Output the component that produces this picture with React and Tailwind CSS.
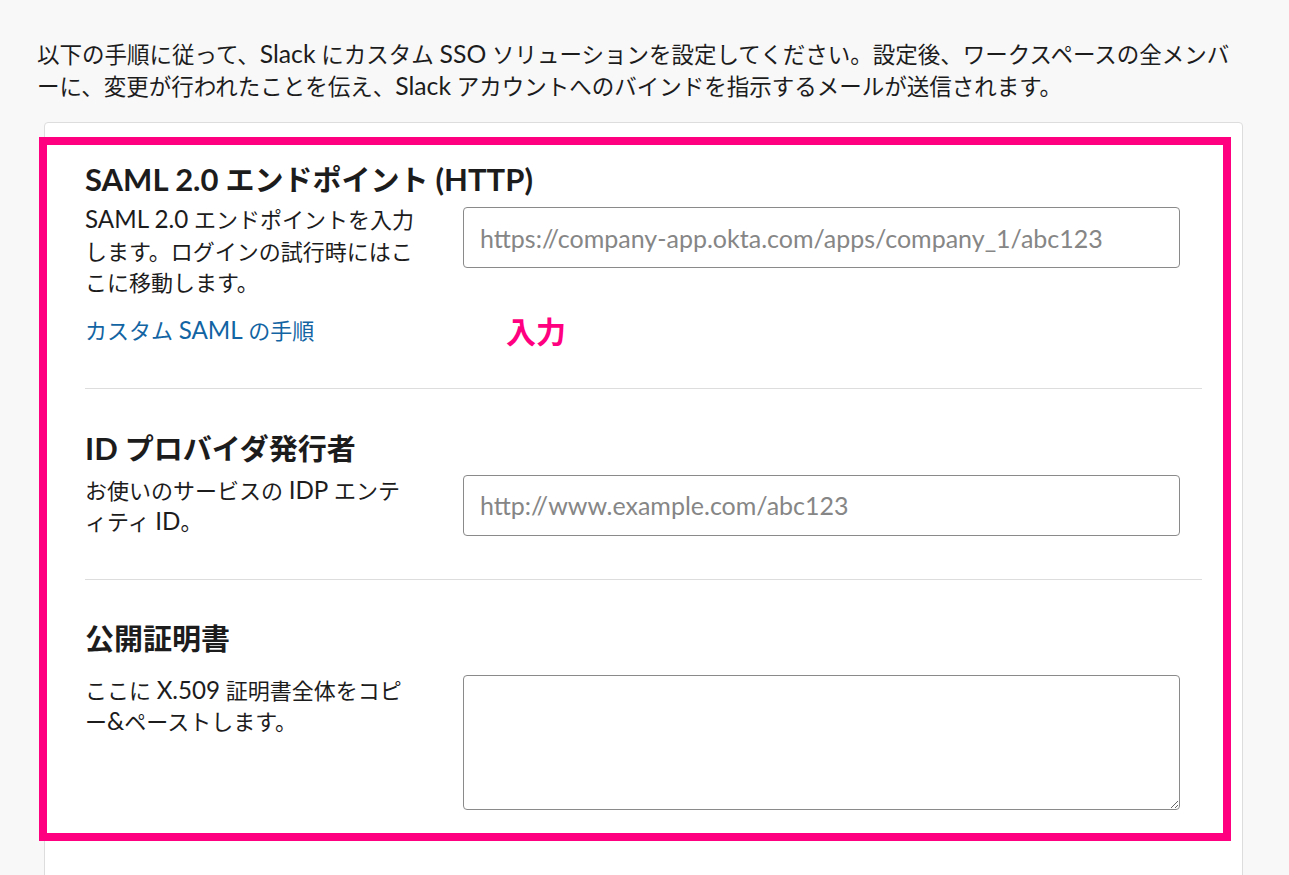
// Latin runs render a little larger than the CJK text around them
function L({ children, title }) {
  return (
    <span className={title ? "text-[1.07em] leading-none" : "text-[1.1em] leading-none"}>{children}</span>
  );
}

export default function App() {
  const font = "font-['Lato','Noto_Sans_CJK_JP',sans-serif]";
  return (
    <div className={`min-h-screen bg-[#f8f8f8] text-[#1d1c1d] ${font} overflow-hidden`}>
      <div className="pl-[37px] pt-[39px] w-[1242px]">
        <p className="text-[22.5px] leading-[32px]">
          以下の手順に従って、<L>Slack</L> にカスタム <L>SSO</L> ソリューションを設定してください。設定後、ワークスペースの全メンバーに、変更が行われたことを伝え、<L>Slack</L> アカウントへのバインドを指示するメールが送信されます。
        </p>
      </div>

      <div className="ml-[44px] mt-[19px] w-[1199px] bg-white border border-[#dddddd] rounded-[4px] pt-[14px] pb-[80px]">
        <div className="-ml-[6px] w-[1192px] border-[8px] border-[#ff0080] pl-[38px] pr-[21px]">
          {/* SAML endpoint */}
          <section className="pt-[17px] pb-[41px] border-b border-[#dddddd]">
            <h2 className="text-[29px] leading-[36px] font-bold">
              <L title>SAML 2.0</L> エンドポイント <L title>(HTTP)</L>
            </h2>
            <div className="flex items-start mt-[6px]">
              <p className="w-[332px] mr-[8px] text-[22px] leading-[31.5px]">
                <L>SAML 2.0</L> エンドポイントを入力します。ログインの試行時にはここに移動します。
              </p>
              <input
                type="text"
                placeholder="https://company-app.okta.com/apps/company_1/abc123"
                className="ml-[38px] mt-[3px] w-[717px] h-[61px] px-[16px] text-[25px] border border-[#8a8a8a] rounded-[4px] placeholder-[#868686] focus:outline-none"
              />
            </div>
            <div className="flex items-center mt-[16px]">
              <a href="#" className="w-[340px] text-[22px] leading-[32px] text-[#1264a3]">
                カスタム <L>SAML</L> の手順
              </a>
              <span className="ml-[81px] text-[30px] leading-[32px] font-bold text-[#ff0080]">入力</span>
            </div>
          </section>

          {/* IdP issuer */}
          <section className="pt-[42px] pb-[42px] border-b border-[#dddddd]">
            <h2 className="text-[29px] leading-[36px] font-bold">
              <L title>ID</L> プロバイダ発行者
            </h2>
            <div className="flex items-start mt-[8px]">
              <p className="w-[332px] mr-[8px] text-[22px] leading-[31px]">
                お使いのサービスの <L>IDP</L> エンティティ <L>ID</L>。
              </p>
              <input
                type="text"
                placeholder="http://www.example.com/abc123"
                className="ml-[38px] w-[717px] h-[61px] px-[16px] text-[25px] border border-[#8a8a8a] rounded-[4px] placeholder-[#868686] focus:outline-none"
              />
            </div>
          </section>

          {/* Public certificate */}
          <section className="pt-[41px] pb-[23px]">
            <h2 className="text-[29px] leading-[36px] font-bold">公開証明書</h2>
            <div className="flex items-start mt-[18px]">
              <p className="w-[332px] mr-[8px] text-[22px] leading-[31px]">
                ここに <L>X.509</L> 証明書全体をコピー<L>&amp;</L>ペーストします。
              </p>
              <textarea className="ml-[38px] w-[717px] h-[135px] px-[16px] py-[10px] text-[25px] border border-[#8a8a8a] rounded-[4px] focus:outline-none" />
            </div>
          </section>
        </div>
      </div>
    </div>
  );
}
